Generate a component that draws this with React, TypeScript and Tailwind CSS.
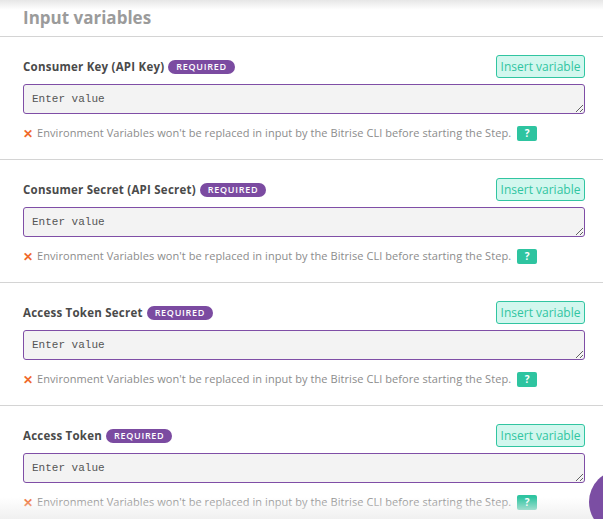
const fields = [
  "Consumer Key (API Key)",
  "Consumer Secret (API Secret)",
  "Access Token Secret",
  "Access Token",
];

function Field({ label }: { label: string }) {
  return (
    <div className="border-t border-[#d4d4d4] pl-[23px] pr-[18px] pt-[18px] pb-[18px]">
      <div className="flex items-center justify-between h-[23px]">
        <div className="flex items-center gap-[4px]">
          <span className="text-[11.5px] tracking-[0.02em] font-bold text-[#4a4a4a]">{label}</span>
          <span className="h-[14px] px-[8px] rounded-full bg-[#7b4ba1] text-white text-[9px] font-semibold tracking-[0.08em] leading-[14px]">
            REQUIRED
          </span>
        </div>
        <button className="h-[23px] w-[89px] rounded-[3px] border border-[#31c5a1] bg-[#d2f7ee] text-[12px] text-[#31c5a1]">
          Insert variable
        </button>
      </div>
      <textarea
        placeholder="Enter value"
        rows={1}
        className="mt-[6px] block w-full h-[30px] rounded-[3px] border border-[#7f4ea6] bg-[#f3f3f3] px-[8px] py-[6px] text-[11px] leading-[16px] text-[#444] placeholder:text-[#555] font-['Liberation_Mono',monospace] outline-none"
      />
      <div className="mt-[12px] flex items-center h-[15px]">
        <span className="text-[#f06a2a] text-[12px] font-black mr-[4px] leading-none">✕</span>
        <span className="text-[11px] tracking-[0.006em] text-[#8c8c8c]">
          Environment Variables won't be replaced in input by the Bitrise CLI before starting the Step.
        </span>
        <span className="ml-[6px] w-[20px] h-[15px] rounded-[2px] bg-[#2ec4a0] text-white text-[10px] font-bold flex items-center justify-center">
          ?
        </span>
      </div>
    </div>
  );
}

export default function App() {
  return (
    <div className="relative w-[603px] h-[519px] overflow-hidden bg-white font-['Open_Sans',sans-serif]">
      <div className="absolute inset-x-0 top-0 h-[10px] bg-gradient-to-b from-[#e6e6e6] to-transparent" />
      <div className="h-[36px] pl-[23px] flex items-center">
        <h2 className="text-[17px] font-bold text-[#9b9b9b]">Input variables</h2>
      </div>
      {fields.map((f) => (
        <Field key={f} label={f} />
      ))}
      <div className="absolute inset-x-0 bottom-0 h-[22px] bg-gradient-to-t from-[#f0f0f0] to-transparent" />
      <div className="absolute left-[589px] top-[470px] w-[64px] h-[64px] rounded-full bg-[#7b4ea3]" />
    </div>
  );
}
